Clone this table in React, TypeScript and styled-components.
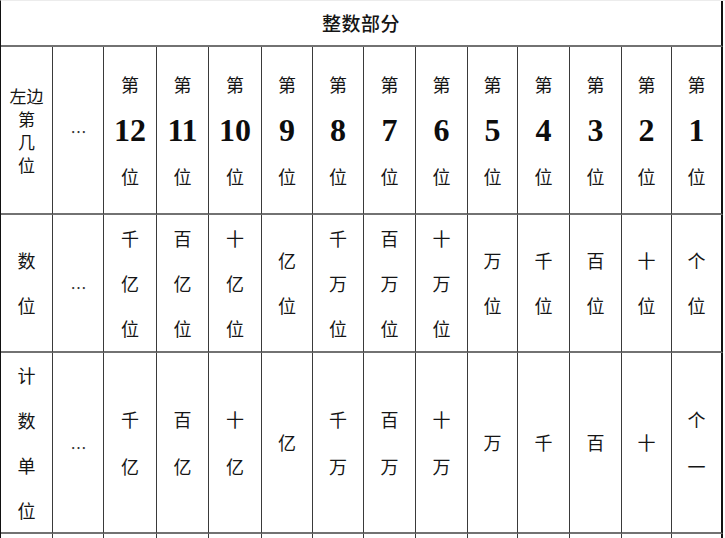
import React from 'react'
import styled, { createGlobalStyle } from 'styled-components'

const GlobalStyle = createGlobalStyle`
  html, body {
    margin: 0;
    padding: 0;
    background: #ffffff;
    overflow: hidden;
  }
  body {
    font-family: "Noto Sans CJK SC", "Liberation Serif", serif;
    color: #151515;
  }
`

const COLS = [52, 51, 53, 52, 53, 51, 51, 52, 52, 50, 52, 52, 50, 51]

const StyledTable = styled.div`
  display: grid;
  grid-template-columns: ${COLS.map((w) => `${w}px`).join(' ')};
  grid-template-rows: 46px 168px 138px 181px 60px;
  width: 725px;
  border-top: 1px solid #ececec;
  border-left: 1px solid #111;
  box-sizing: border-box;
`

const StyledHeader = styled.div`
  grid-column: 1 / -1;
  display: flex;
  align-items: center;
  justify-content: center;
  border-bottom: 2px solid #727272;
  border-right: 2px solid #111;
  font-size: 19px;
  font-weight: 500;
  letter-spacing: 0.5px;
  padding-bottom: 1px;
`

const StyledCell = styled.div<{ last?: boolean; lineHeight: number; size: number }>`
  display: flex;
  flex-direction: column;
  align-items: center;
  justify-content: center;
  box-sizing: border-box;
  border-bottom: 2px solid #727272;
  border-right: ${({ last }) => (last ? '2px solid #111' : '1px solid #3a3a3a')};
  font-size: ${({ size }) => size}px;
  line-height: ${({ lineHeight }) => lineHeight}px;
  text-align: center;
`

const StyledLine = styled.span``

const StyledNumber = styled.span`
  font-family: "Liberation Serif", serif;
  font-weight: bold;
  font-size: 32px;
  color: #0d0d0d;
`

const StyledDots = styled.span<{ shift: number }>`
  font-size: 16px;
  letter-spacing: -1px;
  color: #333;
  padding-top: ${({ shift }) => shift}px;
`

const positions = [12, 11, 10, 9, 8, 7, 6, 5, 4, 3, 2, 1]

const places: string[][] = [
  ['千', '亿', '位'],
  ['百', '亿', '位'],
  ['十', '亿', '位'],
  ['亿', '位'],
  ['千', '万', '位'],
  ['百', '万', '位'],
  ['十', '万', '位'],
  ['万', '位'],
  ['千', '位'],
  ['百', '位'],
  ['十', '位'],
  ['个', '位'],
]

const units: string[][] = [
  ['千', '亿'],
  ['百', '亿'],
  ['十', '亿'],
  ['亿'],
  ['千', '万'],
  ['百', '万'],
  ['十', '万'],
  ['万'],
  ['千'],
  ['百'],
  ['十'],
  ['个', '一'],
]

const Lines: React.FC<{ items: string[] }> = ({ items }) => (
  <>
    {items.map((t, i) => (
      <StyledLine key={i}>{t}</StyledLine>
    ))}
  </>
)

const App: React.FC = () => {
  return (
    <>
      <GlobalStyle />
      <StyledTable>
        <StyledHeader>整数部分</StyledHeader>

        {/* 第几位 */}
        <StyledCell size={17} lineHeight={23}>
          <Lines items={['左边', '第', '几', '位']} />
        </StyledCell>
        <StyledCell size={18} lineHeight={46}>
          <StyledDots shift={2}>…</StyledDots>
        </StyledCell>
        {positions.map((n, i) => (
          <StyledCell key={n} size={18} lineHeight={46} last={i === positions.length - 1}>
            <StyledLine>第</StyledLine>
            <StyledNumber>{n}</StyledNumber>
            <StyledLine>位</StyledLine>
          </StyledCell>
        ))}

        {/* 数位 */}
        <StyledCell size={18} lineHeight={45}>
          <Lines items={['数', '位']} />
        </StyledCell>
        <StyledCell size={18} lineHeight={45}>
          <StyledDots shift={8}>…</StyledDots>
        </StyledCell>
        {places.map((p, i) => (
          <StyledCell key={i} size={18} lineHeight={45} last={i === places.length - 1}>
            <Lines items={p} />
          </StyledCell>
        ))}

        {/* 计数单位 */}
        <StyledCell size={18} lineHeight={45}>
          <Lines items={['计', '数', '单', '位']} />
        </StyledCell>
        <StyledCell size={18} lineHeight={45}>
          <StyledDots shift={10}>…</StyledDots>
        </StyledCell>
        {units.map((u, i) => (
          <StyledCell key={i} size={18} lineHeight={47} last={i === units.length - 1}>
            <Lines items={u} />
          </StyledCell>
        ))}

        {/* next row, cut off */}
        {COLS.map((_, i) => (
          <StyledCell key={`r4-${i}`} size={18} lineHeight={45} last={i === COLS.length - 1} />
        ))}
      </StyledTable>
    </>
  )
}

export default App
